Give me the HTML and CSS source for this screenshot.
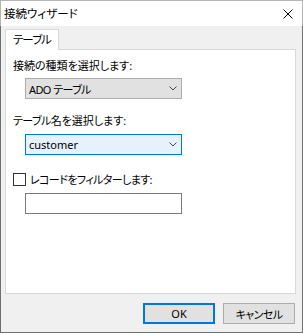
FILE: index.html
```html
<!DOCTYPE html>
<html lang="ja">
<head>
    <meta charset="UTF-8">
    <title>接続ウィザード</title>
    <link rel="stylesheet" href="styles.css">
</head>
<body>
    <div class="window">
        <div class="titlebar">
            <span class="title">接続ウィザード</span>
            <svg class="close" width="10" height="10" viewBox="0 0 10 10">
                <path d="M0.5 0.5 L9.5 9.5 M9.5 0.5 L0.5 9.5" stroke="#000" stroke-width="1" fill="none"/>
            </svg>
        </div>
        <div class="content">
            <div class="tabs">
                <div class="tab">テーブル</div>
            </div>
            <div class="panel">
                <div class="label">接続の種類を選択します:</div>
                <div class="combo">
                    <span class="kana">ADO テーブル</span>
                    <svg width="8" height="5" viewBox="0 0 8 5"><path d="M0.5 0.5 L4 4 L7.5 0.5" stroke="#444" fill="none"/></svg>
                </div>
                <div class="label second"><span class="kana">テーブル</span>名を選択します:</div>
                <div class="combo focused">
                    <span>customer</span>
                    <svg width="8" height="5" viewBox="0 0 8 5"><path d="M0.5 0.5 L4 4 L7.5 0.5" stroke="#444" fill="none"/></svg>
                </div>
                <div class="check-row">
                    <span class="checkbox"></span>
                    <span class="narrow">レコードをフィルターします:</span>
                </div>
                <div class="textbox"></div>
            </div>
            <div class="footer">
                <div class="button default">OK</div>
                <div class="button"><span class="kana">キャンセル</span></div>
            </div>
        </div>
    </div>
</body>
</html>
```

FILE: styles.css
```css
body {
    margin: 0;
    background: #ffffff;
    font-family: "Noto Sans", "Noto Sans CJK JP", sans-serif;
    font-size: 11px;
    font-feature-settings: "palt";
    color: #000000;
}
.window {
    width: 303px;
    height: 333px;
    display: flex;
    flex-direction: column;
}
.titlebar {
    height: 26px;
    box-sizing: border-box;
    border: 1px solid #b4b4b4;
    border-bottom: none;
    background: #ffffff;
    display: flex;
    align-items: center;
    justify-content: space-between;
    padding: 0 9px 0 3px;
}
.title {
    font-size: 11.5px;
    line-height: 16px;
}
.content {
    flex: 1;
    display: flex;
    flex-direction: column;
    background: #f0f0f0;
    border: 1px solid #6f6f6f;
    border-top: none;
    padding: 3px 6px 0 4px;
}
.tabs {
    display: flex;
}
.tab {
    position: relative;
    z-index: 1;
    height: 21px;
    margin-bottom: -1px;
    box-sizing: border-box;
    width: 54px;
    padding: 0 0 0 7px;
    white-space: nowrap;
    letter-spacing: -1px;
    border: 1px solid #d9d9d9;
    border-bottom: none;
    background: #ffffff;
    font-size: 11.5px;
    line-height: 20px;
}
.panel {
    flex: 1;
    background: #ffffff;
    border: 1px solid #d9d9d9;
    padding: 8px 0 0 7px;
    display: flex;
    flex-direction: column;
    align-items: flex-start;
}
.label {
    line-height: 16px;
    white-space: nowrap;
}
.label.second {
    margin-top: 14px;
}
.kana {
    letter-spacing: -0.6px;
}
.combo {
    margin: 4px 0 0 12px;
    width: 157px;
    height: 21px;
    box-sizing: border-box;
    border: 1px solid #adadad;
    background: #e1e1e1;
    display: flex;
    align-items: center;
    justify-content: space-between;
    padding: 0 4px 0 3px;
}
.combo.focused {
    margin-top: 5px;
    border-color: #0078d7;
    background: #e5f1fb;
}
.check-row {
    margin-top: 16px;
    height: 16px;
    display: flex;
    align-items: center;
    gap: 4px;
    white-space: nowrap;
}
.narrow {
    letter-spacing: -0.6px;
}
.checkbox {
    width: 13px;
    height: 13px;
    box-sizing: border-box;
    border: 1px solid #333333;
    background: #ffffff;
}
.textbox {
    margin: 6px 0 0 12px;
    width: 157px;
    height: 21px;
    box-sizing: border-box;
    border: 1px solid #7a7a7a;
    background: #ffffff;
}
.footer {
    display: flex;
    justify-content: flex-end;
    gap: 8px;
    padding: 9px 1px 8px 0;
}
.button {
    width: 72px;
    height: 21px;
    box-sizing: border-box;
    border: 1px solid #adadad;
    background: #e1e1e1;
    display: flex;
    align-items: center;
    justify-content: center;
}
.button.default {
    border: 2px solid #0078d7;
}
```
